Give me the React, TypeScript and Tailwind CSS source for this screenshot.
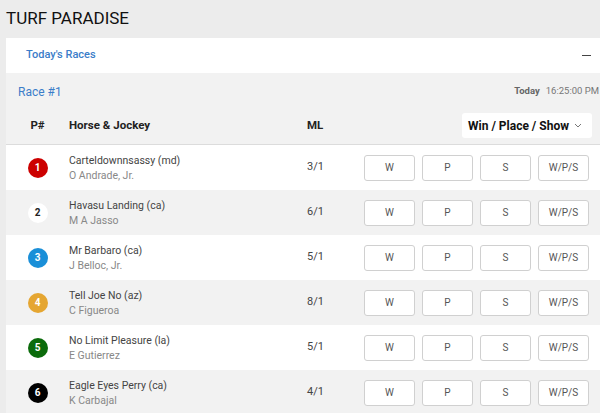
import React from 'react';

interface Runner {
  pp: number;
  horse: string;
  jockey: string;
  ml: string;
  badge: string;
}

const runners: Runner[] = [
  { pp: 1, horse: 'Carteldownnsassy (md)', jockey: 'O Andrade, Jr.', ml: '3/1', badge: 'bg-[#cc0000] text-white' },
  { pp: 2, horse: 'Havasu Landing (ca)', jockey: 'M A Jasso', ml: '6/1', badge: 'bg-white text-[#222]' },
  { pp: 3, horse: 'Mr Barbaro (ca)', jockey: 'J Belloc, Jr.', ml: '5/1', badge: 'bg-[#1a8fd8] text-white' },
  { pp: 4, horse: 'Tell Joe No (az)', jockey: 'C Figueroa', ml: '8/1', badge: 'bg-[#e5a632] text-white' },
  { pp: 5, horse: 'No Limit Pleasure (la)', jockey: 'E Gutierrez', ml: '5/1', badge: 'bg-[#0b6b0b] text-white' },
  { pp: 6, horse: 'Eagle Eyes Perry (ca)', jockey: 'K Carbajal', ml: '4/1', badge: 'bg-black text-white' },
];

const bets = ['W', 'P', 'S', 'W/P/S'];

const App: React.FC = () => {
  return (
    <div className="w-[600px] h-[413px] overflow-hidden bg-[#ececec] font-['Roboto',sans-serif]">
      <div className="h-[38px] flex items-center pl-[6px] text-[17px] text-[#111]">
        TURF PARADISE
      </div>
      <div className="ml-[6px]">
        <div className="h-[35px] bg-white flex items-center justify-between pl-[20px] pr-[8px]">
          <span className="text-[11px] font-medium text-[#3b7dc9]">Today's Races</span>
          <span className="w-[9px] h-[1px] bg-[#444] mr-[1px]" />
        </div>
        <div className="h-[34px] bg-[#f2f2f2] flex items-center justify-between pl-[12px] pt-[3px]">
          <span className="text-[12px] text-[#3b7dc9]">Race #1</span>
          <span className="text-[9.5px] whitespace-nowrap mr-[1px]">
            <span className="font-bold text-[#666]">Today</span>
            <span className="text-[#777] ml-[6px]">16:25:00 PM</span>
          </span>
        </div>
        <div className="h-[38px] bg-[#f2f2f2] border-b border-[#dcdcdc] flex items-center text-[11.5px] font-bold text-[#222]">
          <div className="w-[63px] text-center">P#</div>
          <div className="w-[238px]">Horse &amp; Jockey</div>
          <div className="w-[155px]">ML</div>
          <div className="w-[130px] h-[25px] bg-white rounded-[3px] flex items-center justify-between pl-[6px] pr-[10px]">
            <span className="text-[12px] font-bold text-[#111] whitespace-nowrap">Win / Place / Show</span>
            <svg width="8" height="5" viewBox="0 0 8 5" fill="none">
              <path d="M1 1l3 3 3-3" stroke="#777" strokeWidth="1" />
            </svg>
          </div>
        </div>
        {runners.map((r, i) => (
          <div
            key={r.pp}
            className={`h-[45px] flex items-center ${i % 2 === 0 ? 'bg-white' : 'bg-[#f2f2f2]'}`}
          >
            <div className="w-[63px] flex justify-center">
              <div className={`w-[20px] h-[20px] rounded-full flex items-center justify-center text-[10px] font-bold ${r.badge}`}>
                {r.pp}
              </div>
            </div>
            <div className="w-[238px] flex flex-col gap-[2px] text-[10.5px] leading-[13px]">
              <span className="text-[#444]">{r.horse}</span>
              <span className="text-[#888]">{r.jockey}</span>
            </div>
            <div className="w-[57px] text-[11px] text-[#444]">{r.ml}</div>
            <div className="flex gap-[7px]">
              {bets.map((b) => (
                <button
                  key={b}
                  className="w-[51px] h-[26px] bg-white border border-[#d0d0d0] rounded-[3px] text-[10px] text-[#555]"
                >
                  {b}
                </button>
              ))}
            </div>
          </div>
        ))}
      </div>
    </div>
  );
};

export default App;
